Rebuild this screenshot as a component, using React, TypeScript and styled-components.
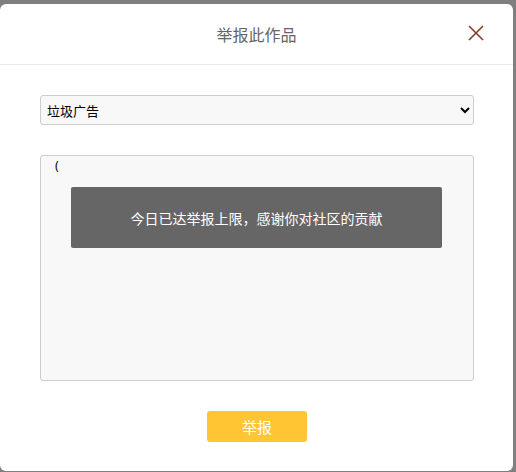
import styled, {createGlobalStyle} from "styled-components";

const GlobalStyle = createGlobalStyle`
    html, body {
        margin: 0;
        padding: 0;
        background: #7f7f7f;
        font-family: "Noto Sans CJK SC", "Noto Sans", sans-serif;
    }
`;

const Page = styled.div`
    height: 472px;
    padding: 4px 3px 0 0;
    box-sizing: border-box;
    overflow: hidden;
`;

const Modal = styled.div`
    width: 513px;
    height: 467px;
    background: #fff;
    border-radius: 6px;
    display: flex;
    flex-direction: column;
`;

const Header = styled.div`
    height: 60px;
    border-bottom: 1px solid #eaeaea;
    display: flex;
    align-items: center;
    justify-content: center;
    position: relative;
`;

const Title = styled.div`
    font-size: 16px;
    color: #666;
`;

const CloseButton = styled.button`
    position: absolute;
    right: 28px;
    top: 20px;
    width: 18px;
    height: 18px;
    padding: 0;
    border: none;
    background: transparent;
    cursor: pointer;
    display: flex;
    align-items: center;
    justify-content: center;
`;

const Body = styled.div`
    padding: 30px 39px 0 40px;
    display: flex;
    flex-direction: column;
`;

const Select = styled.select`
    height: 30px;
    width: 100%;
    background: #f8f8f8;
    border: 1px solid #ccc;
    border-radius: 3px;
    font-family: "Noto Sans CJK SC", sans-serif;
    font-size: 13px;
    color: #000;
    padding: 0 2px;
`;

const AreaWrap = styled.div`
    position: relative;
    margin-top: 30px;
    height: 226px;
`;

const TextArea = styled.textarea`
    width: 100%;
    height: 100%;
    box-sizing: border-box;
    background: #f8f8f8;
    border: 1px solid #ccc;
    border-radius: 3px;
    padding: 4px 12px;
    font-family: "DejaVu Sans Mono", monospace;
    font-size: 12px;
    color: #000;
    resize: none;
    outline: none;
`;

const Toast = styled.div`
    position: absolute;
    left: 31px;
    top: 32px;
    width: 371px;
    height: 61px;
    background: #666;
    border-radius: 2px;
    color: #fff;
    font-size: 14px;
    display: flex;
    align-items: center;
    justify-content: center;
`;

const Footer = styled.div`
    display: flex;
    justify-content: center;
    margin-top: 30px;
`;

const SubmitButton = styled.button`
    width: 100px;
    height: 31px;
    background: #ffc533;
    border: none;
    border-radius: 3px;
    color: #fff;
    font-family: "Noto Sans CJK SC", sans-serif;
    font-size: 15px;
    cursor: pointer;
`;

function App() {
    return (
        <>
            <GlobalStyle/>
            <Page>
                <Modal>
                    <Header>
                        <Title>举报此作品</Title>
                        <CloseButton aria-label="关闭">
                            <svg width="16" height="16" viewBox="0 0 16 16">
                                <path d="M1 1 L15 15 M15 1 L1 15" stroke="#8c3b2b" strokeWidth="1.6" fill="none"/>
                            </svg>
                        </CloseButton>
                    </Header>
                    <Body>
                        <Select defaultValue="spam">
                            <option value="spam">垃圾广告</option>
                            <option value="abuse">人身攻击</option>
                            <option value="other">其他</option>
                        </Select>
                        <AreaWrap>
                            <TextArea defaultValue="("/>
                            <Toast>今日已达举报上限，感谢你对社区的贡献</Toast>
                        </AreaWrap>
                        <Footer>
                            <SubmitButton>举报</SubmitButton>
                        </Footer>
                    </Body>
                </Modal>
            </Page>
        </>
    )
}

export default App
